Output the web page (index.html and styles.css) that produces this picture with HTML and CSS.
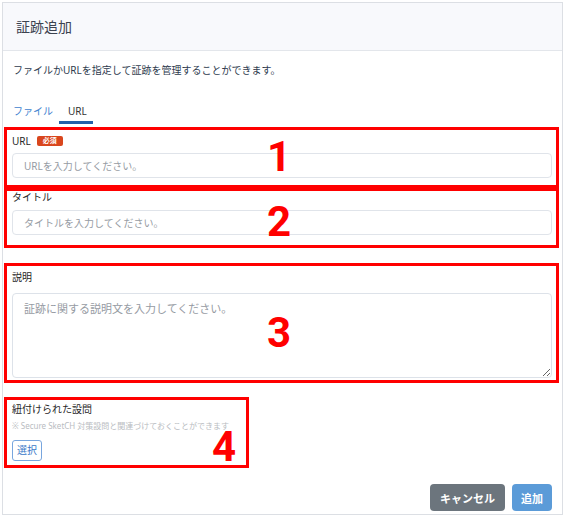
FILE: index.html
```html
<!DOCTYPE html>
<html lang="ja">
<head>
<meta charset="utf-8">
<title>証跡追加</title>
<link rel="stylesheet" href="styles.css">
</head>
<body>
<div class="modal">
  <div class="modal-header">
    <h1 class="modal-title">証跡追加</h1>
  </div>
  <div class="modal-body">
    <p class="desc">ファイルかURLを指定して証跡を管理することができます。</p>
    <div class="tabs">
      <span class="tab">ファイル</span>
      <span class="tab active">URL</span>
    </div>
    <div class="box box-url">
      <div class="label">URL <span class="badge">必須</span></div>
      <input class="input" type="text" placeholder="URLを入力してください。">
      <span class="num num-1">1</span>
    </div>
    <div class="box box-title">
      <div class="label">タイトル</div>
      <input class="input" type="text" placeholder="タイトルを入力してください。">
      <span class="num num-2">2</span>
    </div>
    <div class="box box-desc">
      <div class="label">説明</div>
      <textarea class="textarea" placeholder="証跡に関する説明文を入力してください。"></textarea>
      <span class="num num-3">3</span>
    </div>
    <div class="box box-link">
      <div class="label">紐付けられた設問</div>
      <div class="note">※ Secure SketCH 対策設問と関連づけておくことができます</div>
      <button class="btn-select" type="button">選択</button>
      <span class="num num-4">4</span>
    </div>
  </div>
  <div class="modal-footer">
    <button class="btn btn-cancel" type="button">キャンセル</button>
    <button class="btn btn-add" type="button">追加</button>
  </div>
</div>
</body>
</html>
```

FILE: styles.css
```css
* {
  box-sizing: border-box;
}

html, body {
  margin: 0;
  padding: 0;
  background: #ffffff;
}

body {
  font-family: "Noto Sans", "Noto Sans CJK JP", sans-serif;
  color: #333;
  padding: 2px 0 0 2px;
}

.modal {
  width: 561px;
  height: 513px;
  border: 1px solid #dcdfe4;
  display: flex;
  flex-direction: column;
  background: #fff;
}

.modal-header {
  height: 48px;
  background: #f8f9fc;
  border-bottom: 1px solid #e3e6eb;
  display: flex;
  align-items: center;
  padding-left: 13px;
}

.modal-title {
  margin: 0;
  font-size: 14px;
  font-weight: 400;
  color: #3c4350;
  line-height: 20px;
}

.modal-body {
  padding: 0 3px 0 1px;
}

.desc {
  margin: 11px 0 0 0;
  padding-left: 9px;
  font-size: 10px;
  line-height: 16px;
  color: #2e3b4e;
}

.tabs {
  display: flex;
  margin-top: 25px;
}

.tab {
  font-size: 10px;
  line-height: 16px;
  padding: 0 6px 2px 9px;
  border-bottom: 3px solid transparent;
  color: #3f83cf;
}

.tab.active {
  color: #333;
  border-bottom-color: #2360a8;
}

.box {
  position: relative;
  border: 3px solid #ff0000;
  padding: 0 4px 0 5px;
}

.box-url {
  margin-top: 3px;
  padding-top: 4px;
  padding-bottom: 7px;
}

.box-title {
  padding-top: 0;
  padding-bottom: 10px;
}

.box-title .label {
  line-height: 13px;
}

.box-title .input {
  margin-top: 6px;
}

.box-desc {
  margin-top: 15px;
  padding-top: 4px;
  padding-bottom: 2px;
}

.box-link {
  margin-top: 14px;
  width: 245px;
  padding-top: 2px;
  padding-bottom: 4px;
}

.label {
  font-size: 10px;
  line-height: 14px;
  color: #262626;
  font-weight: 400;
  display: flex;
  align-items: center;
  gap: 6px;
}

.badge {
  display: inline-block;
  background: #d9461d;
  color: #fff;
  font-size: 7px;
  font-weight: 700;
  line-height: 10px;
  padding: 0 6px;
  border-radius: 2px;
}

.input {
  display: block;
  width: 100%;
  height: 25px;
  margin: 5px 0 0 0;
  border: 1px solid #e0e4ea;
  border-radius: 4px;
  padding: 0 11px;
  font-family: inherit;
  font-size: 10px;
  color: #333;
  background: #fff;
  outline: none;
}

.input::placeholder,
.textarea::placeholder {
  color: #969ba3;
}

.textarea {
  display: block;
  width: 100%;
  height: 85px;
  margin: 9px 0 0 0;
  border: 1px solid #dde2e9;
  border-radius: 4px;
  padding: 7px 11px;
  font-family: inherit;
  font-size: 11px;
  line-height: 16px;
  color: #333;
  background: #fff;
  outline: none;
}

.note {
  margin-top: 4px;
  font-size: 8px;
  line-height: 12px;
  color: #b9bcc1;
}

.btn-select {
  display: block;
  margin-top: 8px;
  height: 21px;
  padding: 0 4px;
  border: 1px solid #78a6de;
  border-radius: 3px;
  background: #fff;
  color: #3a78c8;
  font-family: inherit;
  font-size: 10px;
  line-height: 19px;
}

.num {
  position: absolute;
  font-family: Roboto, "Liberation Sans", sans-serif;
  font-weight: 700;
  font-size: 42px;
  line-height: 30px;
  color: #ff0000;
}

.num-1 { top: 12px; left: 260px; }
.num-2 { top: 16px; left: 260px; }
.num-3 { top: 52px; left: 260px; }
.num-4 { top: 32px; left: 205px; }

.modal-footer {
  margin-top: auto;
  display: flex;
  justify-content: flex-end;
  gap: 7px;
  padding: 0 10px 3px 0;
}

.btn {
  height: 27px;
  border: none;
  border-radius: 4px;
  color: #fff;
  font-family: inherit;
  font-size: 11px;
  font-weight: 700;
}

.btn-cancel {
  background: #6c757d;
  padding: 0 10px;
}

.btn-add {
  background: #5b9bd8;
  padding: 0 9px;
}
```
